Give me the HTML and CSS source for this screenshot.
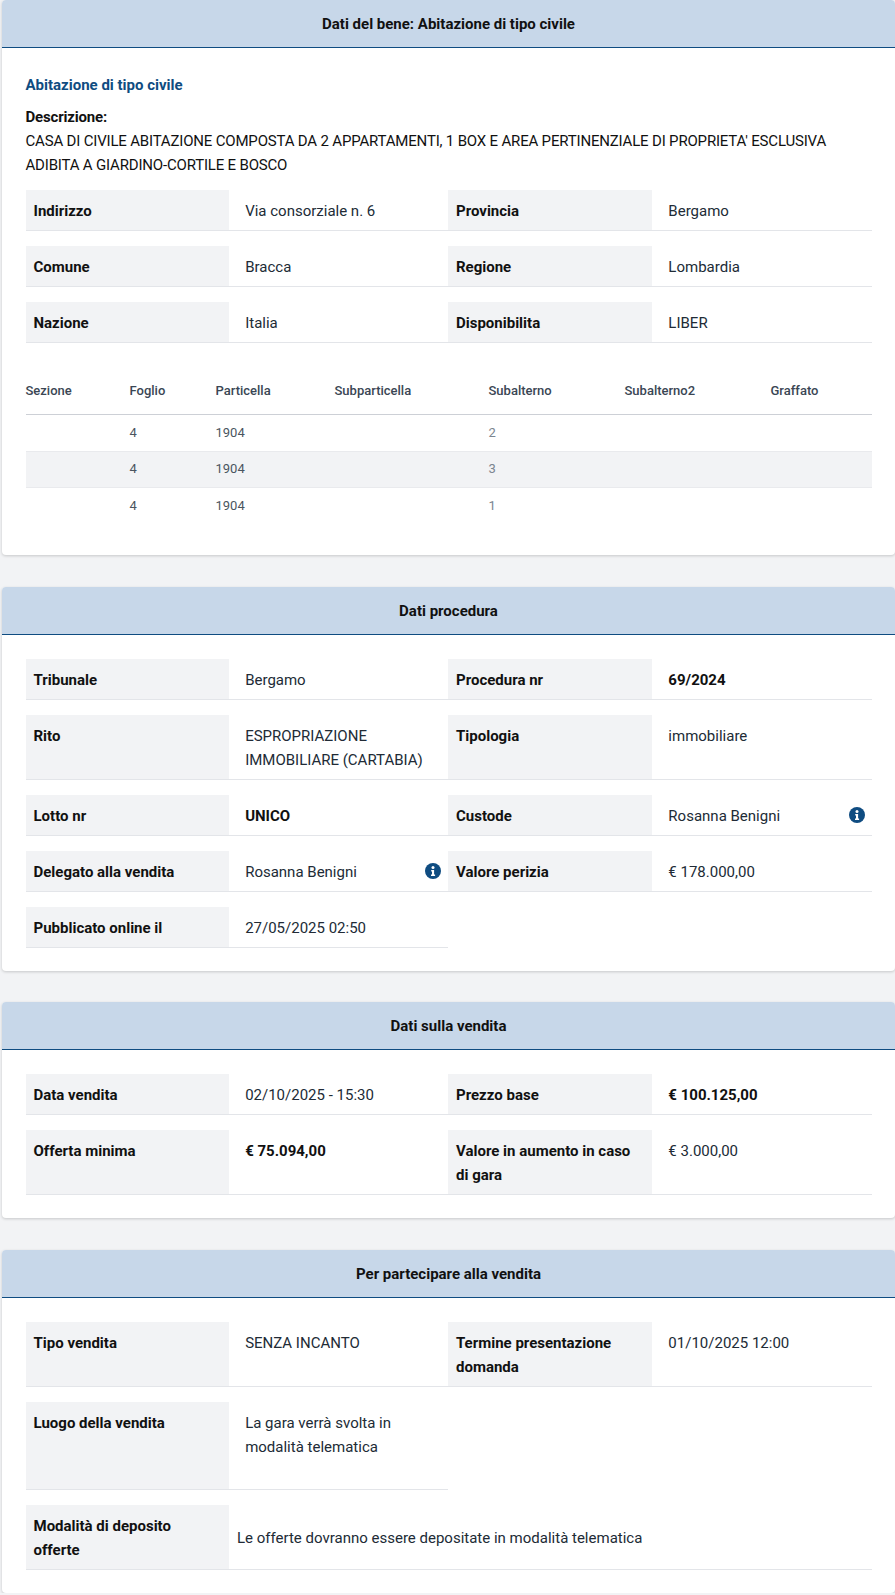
FILE: index.html
```html
<!DOCTYPE html>
<html lang="it">
<head>
    <meta charset="UTF-8">
    <meta name="viewport" content="width=device-width, initial-scale=1.0">
    <title>Dettaglio vendita</title>
    <link rel="stylesheet" href="styles.css">
</head>
<body>

    <!-- Dati del bene -->
    <section class="card">
        <h2 class="card-header">Dati del bene: Abitazione di tipo civile</h2>
        <div class="card-body body-bene">
            <h3 class="item-title">Abitazione di tipo civile</h3>
            <p class="desc"><strong>Descrizione:</strong><br>CASA DI CIVILE ABITAZIONE COMPOSTA DA 2 APPARTAMENTI, 1 BOX E AREA PERTINENZIALE DI PROPRIETA' ESCLUSIVA ADIBITA A GIARDINO-CORTILE E BOSCO</p>
            <div class="info-grid">
                <div class="row"><div class="label">Indirizzo</div><div class="value">Via consorziale n. 6</div></div>
                <div class="row"><div class="label">Provincia</div><div class="value">Bergamo</div></div>
                <div class="row"><div class="label">Comune</div><div class="value">Bracca</div></div>
                <div class="row"><div class="label">Regione</div><div class="value">Lombardia</div></div>
                <div class="row"><div class="label">Nazione</div><div class="value">Italia</div></div>
                <div class="row"><div class="label">Disponibilita</div><div class="value">LIBER</div></div>
            </div>
            <table class="cat-table">
                <thead>
                    <tr><th class="c1">Sezione</th><th class="c2">Foglio</th><th class="c3">Particella</th><th class="c4">Subparticella</th><th class="c5">Subalterno</th><th class="c6">Subalterno2</th><th class="c7">Graffato</th></tr>
                </thead>
                <tbody>
                    <tr><td></td><td>4</td><td>1904</td><td></td><td class="muted">2</td><td></td><td></td></tr>
                    <tr><td></td><td>4</td><td>1904</td><td></td><td class="muted">3</td><td></td><td></td></tr>
                    <tr><td></td><td>4</td><td>1904</td><td></td><td class="muted">1</td><td></td><td></td></tr>
                </tbody>
            </table>
        </div>
    </section>

    <!-- Dati procedura -->
    <section class="card">
        <h2 class="card-header">Dati procedura</h2>
        <div class="card-body">
            <div class="info-grid">
                <div class="row"><div class="label">Tribunale</div><div class="value">Bergamo</div></div>
                <div class="row"><div class="label">Procedura nr</div><div class="value"><b>69/2024</b></div></div>
                <div class="row"><div class="label">Rito</div><div class="value">ESPROPRIAZIONE IMMOBILIARE (CARTABIA)</div></div>
                <div class="row"><div class="label">Tipologia</div><div class="value">immobiliare</div></div>
                <div class="row"><div class="label">Lotto nr</div><div class="value"><b>UNICO</b></div></div>
                <div class="row"><div class="label">Custode</div><div class="value has-icon">Rosanna Benigni
                    <svg class="info-icon" viewBox="0 0 16 16"><circle cx="8" cy="8" r="8" fill="#0f4c81"/><circle cx="8" cy="4.4" r="1.5" fill="#fff"/><path d="M6.2 7h2.900v4.600h1V13H6v-1.400h1V8.400H6.200z" fill="#fff"/></svg>
                </div></div>
                <div class="row"><div class="label">Delegato alla vendita</div><div class="value has-icon">Rosanna Benigni
                    <svg class="info-icon" viewBox="0 0 16 16"><circle cx="8" cy="8" r="8" fill="#0f4c81"/><circle cx="8" cy="4.4" r="1.5" fill="#fff"/><path d="M6.2 7h2.900v4.600h1V13H6v-1.400h1V8.400H6.200z" fill="#fff"/></svg>
                </div></div>
                <div class="row"><div class="label">Valore perizia</div><div class="value">€ 178.000,00</div></div>
                <div class="row"><div class="label">Pubblicato online il</div><div class="value">27/05/2025 02:50</div></div>
            </div>
        </div>
    </section>

    <!-- Dati sulla vendita -->
    <section class="card">
        <h2 class="card-header">Dati sulla vendita</h2>
        <div class="card-body">
            <div class="info-grid">
                <div class="row"><div class="label">Data vendita</div><div class="value">02/10/2025 - 15:30</div></div>
                <div class="row"><div class="label">Prezzo base</div><div class="value"><b>€ 100.125,00</b></div></div>
                <div class="row"><div class="label">Offerta minima</div><div class="value"><b>€ 75.094,00</b></div></div>
                <div class="row"><div class="label">Valore in aumento in caso di gara</div><div class="value">€ 3.000,00</div></div>
            </div>
        </div>
    </section>

    <!-- Per partecipare -->
    <section class="card">
        <h2 class="card-header">Per partecipare alla vendita</h2>
        <div class="card-body">
            <div class="info-grid">
                <div class="row"><div class="label">Tipo vendita</div><div class="value">SENZA INCANTO</div></div>
                <div class="row"><div class="label">Termine presentazione domanda</div><div class="value">01/10/2025 12:00</div></div>
                <div class="row row-place"><div class="label">Luogo della vendita</div><div class="value">La gara verrà svolta in modalità telematica</div></div>
                <div class="row row-wide"><div class="label">Modalità di deposito offerte</div><div class="value value-wide">Le offerte dovranno essere depositate in modalità telematica</div></div>
            </div>
        </div>
    </section>

</body>
</html>
```

FILE: styles.css
```css
/* --- General --- */
* {
    box-sizing: border-box;
}

body {
    margin: 0;
    padding-left: 2px;
    background-color: #f2f3f5;
    font-family: Roboto, "Noto Sans", Arial, sans-serif;
    font-size: 15px;
    line-height: 24px;
    color: #212b36;
}

/* --- Cards --- */
.card {
    margin-bottom: 31.5px;
    background: #fff;
    border-radius: 4px;
    box-shadow: 0 1px 3px rgba(0,0,0,0.18);
}

.card:last-child {
    margin-bottom: 0;
}

.card-header {
    margin: 0;
    height: 48px;
    background-color: #c7d7e9;
    border-bottom: 1px solid #0f4c81;
    border-radius: 4px 4px 0 0;
    font-size: 15px;
    font-weight: 700;
    line-height: 49px;
    text-align: center;
    color: #111;
}

.card-body {
    padding: 24px 23px 23px 23.5px;
}

.body-bene {
    padding-top: 25px;
    padding-bottom: 31px;
}

.item-title {
    margin: 0;
    font-size: 15px;
    font-weight: 700;
    line-height: 24px;
    color: #0f4c81;
}

.desc {
    margin: 8px 0 13px;
    letter-spacing: -0.18px;
    color: #111;
}

/* --- Label / value grid --- */
.info-grid {
    display: grid;
    grid-template-columns: 422.5px 424px;
    row-gap: 15px;
}

.row {
    display: grid;
    grid-template-columns: 48.2% 1fr;
    border-bottom: 1px solid #e3e5e9;
}

.label {
    padding: 9px 8px 7px;
    background-color: #f2f3f5;
    font-weight: 700;
    color: #111;
}

.value {
    padding: 9px 16px 7px;
}

.value b {
    color: #111;
}

.has-icon {
    display: flex;
    justify-content: space-between;
    align-items: flex-start;
    padding-right: 7px;
}

.info-icon {
    width: 16px;
    height: 16px;
    margin-top: 3px;
    flex: none;
}

.row-place {
    min-height: 88px;
}

.row-place .value {
    padding-right: 40px;
}

.row-wide {
    grid-column: 1 / 3;
    grid-template-columns: 203.5px 1fr;
}

.row-wide .label {
    padding-right: 32px;
}

.value-wide {
    padding-left: 8px;
    align-self: center;
}

/* --- Cadastral table --- */
.cat-table {
    width: 100%;
    margin-top: 36px;
    border-collapse: collapse;
    table-layout: fixed;
    font-size: 13px;
}

.cat-table th {
    padding: 0 0 11px;
    text-align: left;
    font-weight: 500;
    color: #3a4654;
    border-bottom: 1px solid #cdd0d6;
}

.cat-table td {
    height: 36.5px;
    padding: 0;
    color: #4a5560;
    border-bottom: 1px solid #e9eaed;
}

.cat-table tr:last-child td {
    border-bottom: none;
}

.cat-table tbody tr:nth-child(2) {
    background-color: #f2f3f5;
}

.cat-table td.muted {
    color: #7b858f;
}

.c1 { width: 104px; }
.c2 { width: 86px; }
.c3 { width: 119px; }
.c4 { width: 154px; }
.c5 { width: 136px; }
.c6 { width: 146px; }
```
